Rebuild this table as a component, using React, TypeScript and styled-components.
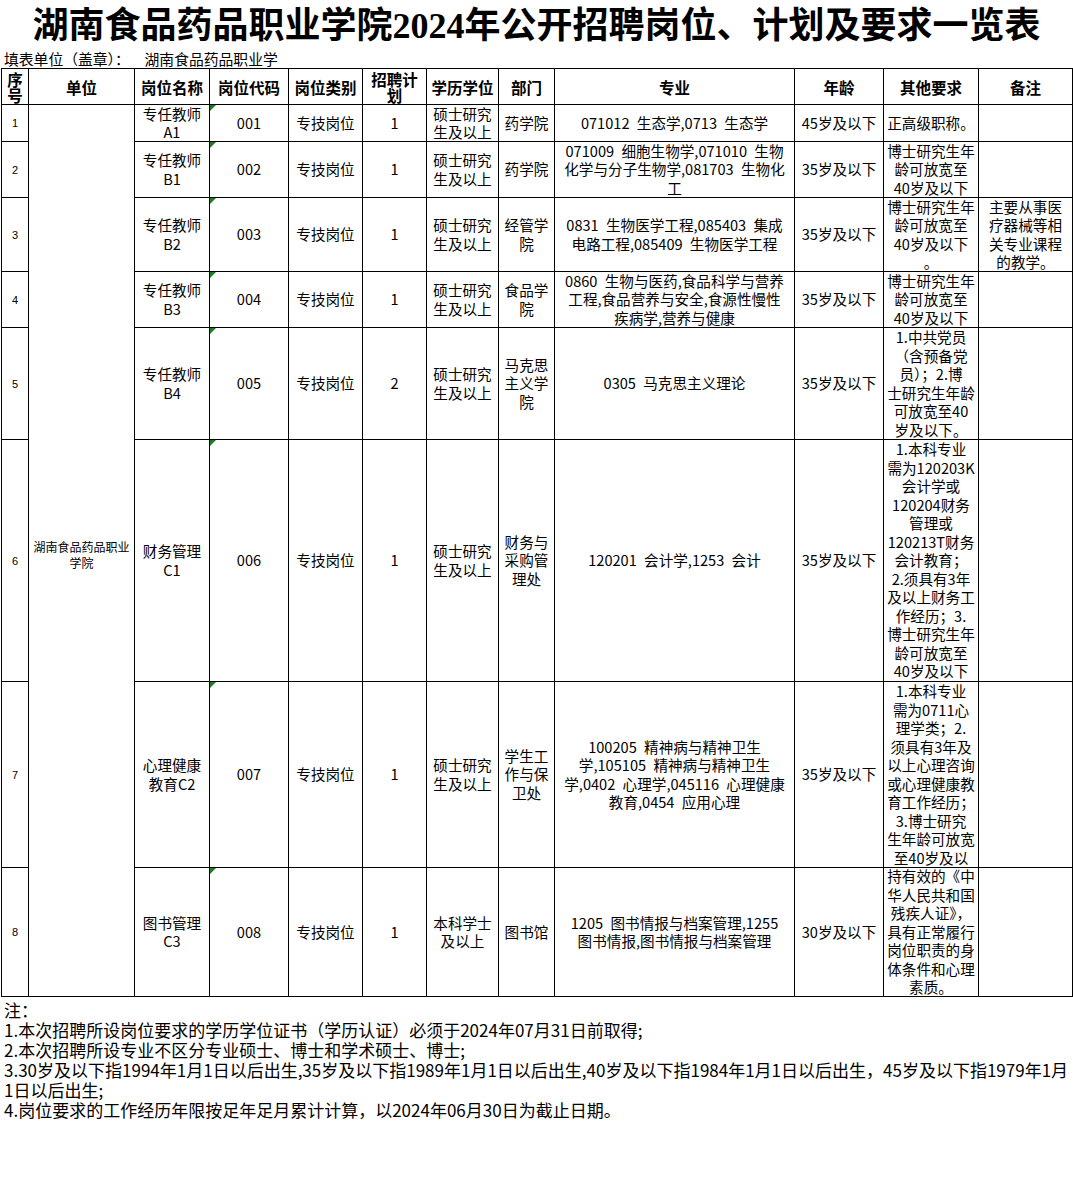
import React from 'react';
import styled, { createGlobalStyle } from 'styled-components';

const GlobalStyle = createGlobalStyle`
  html, body { margin: 0; padding: 0; background: #fff; }
  body { font-family: "Noto Sans CJK SC", "Noto Sans", sans-serif; color: #000; }
`;

const Page = styled.div`
  width: 1073px;
  height: 1180px;
  background: #fff;
  overflow: hidden;
`;

const Title = styled.h1`
  margin: 0;
  height: 50px;
  line-height: 52px;
  text-align: center;
  font-family: "Liberation Serif", "Noto Sans CJK SC", serif;
  font-size: 36px;
  font-weight: 700;
  white-space: nowrap;
`;

const Filler = styled.div`
  height: 18px;
  line-height: 18px;
  padding-left: 4px;
  font-size: 14.8px;
  white-space: pre;
`;

const Grid = styled.div`
  margin-left: 1px;
  display: grid;
  grid-template-columns: 27px 106px 75px 79px 74px 64px 72px 56px 240px 89px 95px 94px;
  grid-template-rows: 36px 37px 56px 74px 56px 112px 242px 186px 129px;
  border-left: 1px solid #000;
  border-top: 1px solid #000;
  width: max-content;
`;

const BaseCell = styled.div`
  position: relative;
  box-sizing: border-box;
  border-right: 1px solid #000;
  border-bottom: 1px solid #000;
  display: flex;
  flex-direction: column;
  align-items: center;
  text-align: center;
  overflow: hidden;
  white-space: nowrap;
`;

const HeadCell = styled(BaseCell)`
  justify-content: center;
  font-size: 15.5px;
  font-weight: 700;
  line-height: 16px;
`;

const Cell = styled(BaseCell)<{ $top?: boolean; $flag?: boolean }>`
  justify-content: ${(p) => (p.$top ? 'flex-start' : 'center')};
  font-size: 14.6px;
  line-height: 18.5px;
  &::before {
    content: '';
    display: ${(p) => (p.$flag ? 'block' : 'none')};
    position: absolute;
    left: 0;
    top: 0;
    width: 0;
    height: 0;
    border-top: 6px solid #1d7d1d;
    border-right: 6px solid transparent;
  }
`;

const NoCell = styled(BaseCell)`
  justify-content: center;
  font-size: 11px;
  line-height: 14px;
  font-family: "Liberation Sans", "Noto Sans CJK SC", sans-serif;
`;

const UnitCell = styled(BaseCell)`
  grid-row: 2 / span 8;
  grid-column: 2;
  justify-content: center;
  font-size: 12px;
  line-height: 16px;
  padding-top: 8px;
`;

const Line = styled.span`
  display: block;
  white-space: pre;
`;

const Notes = styled.div`
  padding: 3px 0 0 4px;
  font-size: 17px;
  line-height: 20px;
`;

const NoteLine = styled.div`
  white-space: pre;
`;

type Row = {
  no: string;
  name: string[];
  code: string;
  plan: string;
  edu: string[];
  dept: string[];
  major: string[];
  age: string;
  other: string[];
  note?: string[];
  otherTop?: boolean;
};

const S = '\u2002';
const masterEdu = ['硕士研究', '生及以上'];
const relax = ['博士研究生年', '龄可放宽至', '40岁及以下'];

const rows: Row[] = [
  {
    no: '1', name: ['专任教师', 'A1'], code: '001', plan: '1', edu: masterEdu, dept: ['药学院'],
    major: [`071012${S}生态学,0713${S}生态学`], age: '45岁及以下', other: ['正高级职称。'],
  },
  {
    no: '2', name: ['专任教师', 'B1'], code: '002', plan: '1', edu: masterEdu, dept: ['药学院'],
    major: [`071009${S}细胞生物学,071010${S}生物`, `化学与分子生物学,081703${S}生物化`, '工'],
    age: '35岁及以下', other: relax,
  },
  {
    no: '3', name: ['专任教师', 'B2'], code: '003', plan: '1', edu: masterEdu, dept: ['经管学', '院'],
    major: [`0831${S}生物医学工程,085403${S}集成`, `电路工程,085409${S}生物医学工程`],
    age: '35岁及以下', other: [...relax, '。'],
    note: ['主要从事医', '疗器械等相', '关专业课程', '的教学。'],
  },
  {
    no: '4', name: ['专任教师', 'B3'], code: '004', plan: '1', edu: masterEdu, dept: ['食品学', '院'],
    major: [`0860${S}生物与医药,食品科学与营养`, '工程,食品营养与安全,食源性慢性', '疾病学,营养与健康'],
    age: '35岁及以下', other: relax,
  },
  {
    no: '5', name: ['专任教师', 'B4'], code: '005', plan: '2', edu: masterEdu, dept: ['马克思', '主义学', '院'],
    major: [`0305${S}马克思主义理论`], age: '35岁及以下',
    other: ['1.中共党员', '（含预备党', '员）；2.博', '士研究生年龄', '可放宽至40', '岁及以下。'],
  },
  {
    no: '6', name: ['财务管理', 'C1'], code: '006', plan: '1', edu: masterEdu, dept: ['财务与', '采购管', '理处'],
    major: [`120201${S}会计学,1253${S}会计`], age: '35岁及以下',
    other: ['1.本科专业', '需为120203K', '会计学或', '120204财务', '管理或', '120213T财务', '会计教育；',
      '2.须具有3年', '及以上财务工', '作经历；3.', '博士研究生年', '龄可放宽至', '40岁及以下'],
  },
  {
    no: '7', name: ['心理健康', '教育C2'], code: '007', plan: '1', edu: masterEdu, dept: ['学生工', '作与保', '卫处'],
    major: [`100205${S}精神病与精神卫生`, `学,105105${S}精神病与精神卫生`, `学,0402${S}心理学,045116${S}心理健康`, `教育,0454${S}应用心理`],
    age: '35岁及以下', otherTop: true,
    other: ['1.本科专业', '需为0711心', '理学类；2.', '须具有3年及', '以上心理咨询', '或心理健康教', '育工作经历；',
      '3.博士研究', '生年龄可放宽', '至40岁及以', '下'],
  },
  {
    no: '8', name: ['图书管理', 'C3'], code: '008', plan: '1', edu: ['本科学士', '及以上'], dept: ['图书馆'],
    major: [`1205${S}图书情报与档案管理,1255`, '图书情报,图书情报与档案管理'], age: '30岁及以下',
    other: ['持有效的《中', '华人民共和国', '残疾人证》，', '具有正常履行', '岗位职责的身', '体条件和心理', '素质。'],
  },
];

const heads: string[][] = [
  ['序', '号'], ['单位'], ['岗位名称'], ['岗位代码'], ['岗位类别'], ['招聘计', '划'],
  ['学历学位'], ['部门'], ['专业'], ['年龄'], ['其他要求'], ['备注'],
];

const Lines: React.FC<{ items: string[] }> = ({ items }) => (
  <>
    {items.map((t, i) => (
      <Line key={i}>{t}</Line>
    ))}
  </>
);

export default function App() {
  return (
    <Page>
      <GlobalStyle />
      <Title>湖南食品药品职业学院2024年公开招聘岗位、计划及要求一览表</Title>
      <Filler>{'填表单位（盖章）：\u2002\u2002湖南食品药品职业学'}</Filler>
      <Grid>
        {heads.map((h, i) => (
          <HeadCell key={i}>
            <Lines items={h} />
          </HeadCell>
        ))}
        <UnitCell>
          <Line>湖南食品药品职业</Line>
          <Line>学院</Line>
        </UnitCell>
        {rows.map((r) => (
          <React.Fragment key={r.no}>
            <NoCell style={{ gridColumn: 1 }}>{r.no}</NoCell>
            <Cell style={{ gridColumn: 3 }}>
              <Lines items={r.name} />
            </Cell>
            <Cell $flag>{r.code}</Cell>
            <Cell>专技岗位</Cell>
            <Cell>{r.plan}</Cell>
            <Cell>
              <Lines items={r.edu} />
            </Cell>
            <Cell>
              <Lines items={r.dept} />
            </Cell>
            <Cell>
              <Lines items={r.major} />
            </Cell>
            <Cell>{r.age}</Cell>
            <Cell $top={r.otherTop}>
              <Lines items={r.other} />
            </Cell>
            <Cell>{r.note ? <Lines items={r.note} /> : null}</Cell>
          </React.Fragment>
        ))}
      </Grid>
      <Notes>
        <NoteLine>注：</NoteLine>
        <NoteLine>1.本次招聘所设岗位要求的学历学位证书（学历认证）必须于2024年07月31日前取得;</NoteLine>
        <NoteLine>2.本次招聘所设专业不区分专业硕士、博士和学术硕士、博士;</NoteLine>
        <NoteLine>3.30岁及以下指1994年1月1日以后出生,35岁及以下指1989年1月1日以后出生,40岁及以下指1984年1月1日以后出生，45岁及以下指1979年1月</NoteLine>
        <NoteLine>1日以后出生;</NoteLine>
        <NoteLine>4.岗位要求的工作经历年限按足年足月累计计算，以2024年06月30日为截止日期。</NoteLine>
      </Notes>
    </Page>
  );
}
